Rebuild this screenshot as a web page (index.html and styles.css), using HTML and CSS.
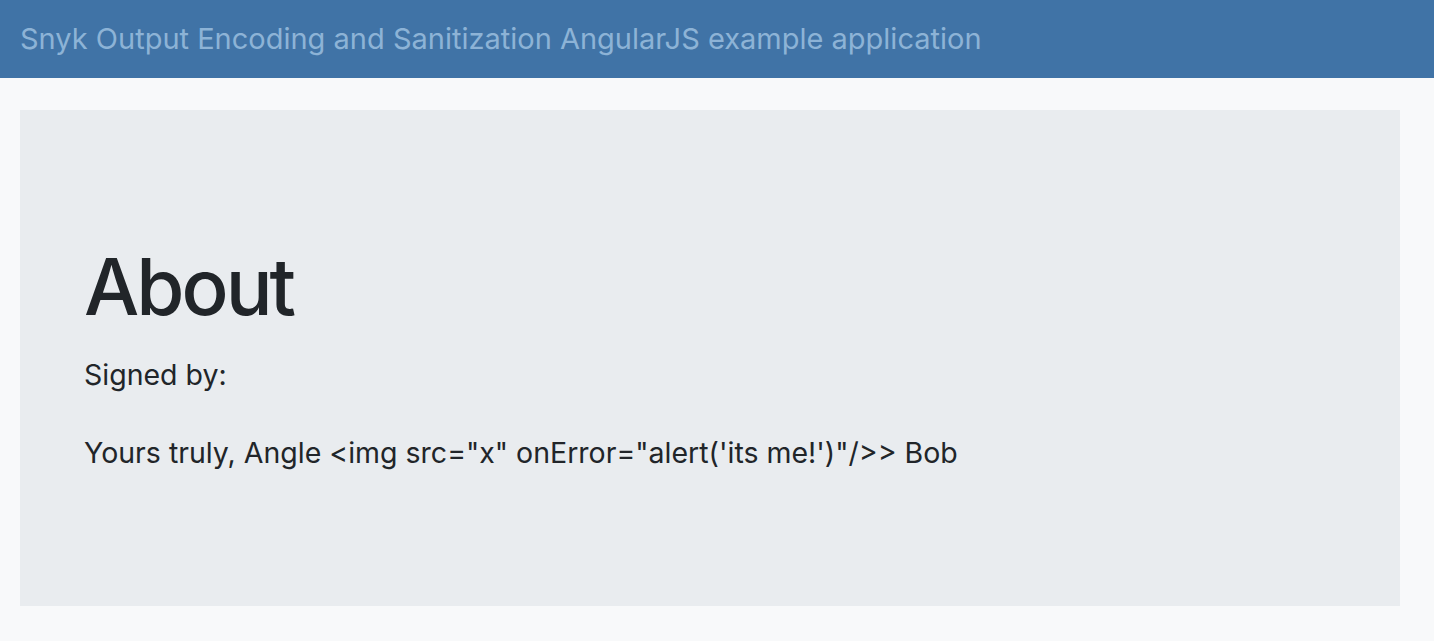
FILE: index.html
```html
<!DOCTYPE html>
<html lang="en">
<head>
<meta charset="utf-8">
<title>About</title>
<link rel="stylesheet" href="styles.css">
</head>
<body>
<nav class="navbar">
  <span class="brand">Snyk Output Encoding and Sanitization AngularJS example application</span>
</nav>
<main class="jumbotron">
  <h1 class="title">About</h1>
  <p class="lead">Signed by:</p>
  <p class="lead">Yours truly, Angle &lt;img src="x" onError="alert('its me!')"/&gt;&gt; Bob</p>
</main>
</body>
</html>
```

FILE: styles.css
```css
html, body {
  margin: 0;
  padding: 0;
}
body {
  background: #f8f9fa;
  color: #212529;
  font-family: Inter, "Noto Sans", sans-serif;
  height: 641px;
  overflow: hidden;
}
.navbar {
  height: 78px;
  background: #4073a6;
  display: flex;
  align-items: center;
  padding: 0 20px;
  box-sizing: border-box;
}
.brand {
  font-size: 29px;
  color: #8db3d6;
  line-height: 1;
  padding-bottom: 2px;
}
.jumbotron {
  margin: 32px 34px 0 20px;
  height: 496px;
  box-sizing: border-box;
  background: #e9ecef;
  padding: 130px 64px 0 64px;
}
.title {
  margin: 0 0 20px 0;
  font-size: 78px;
  font-weight: 500;
  line-height: 1.2;
  letter-spacing: -3px;
}
.lead {
  margin: 0 0 36px 0;
  font-size: 28.5px;
  line-height: 1.5;
  font-weight: 400;
}
```
